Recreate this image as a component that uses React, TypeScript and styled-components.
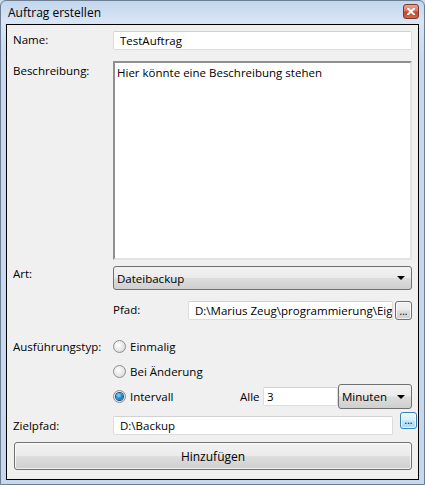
import React from 'react'
import styled, { createGlobalStyle } from 'styled-components'

const GlobalStyle = createGlobalStyle`
  html, body {
    margin: 0;
    padding: 0;
    background: #c9dbef;
  }
  * {
    box-sizing: border-box;
  }
`

const Window = styled.div`
  width: 425px;
  height: 485px;
  display: flex;
  flex-direction: column;
  font-family: "Open Sans", "Noto Sans", sans-serif;
  font-size: 11.5px;
  color: #000;
  border: 1px solid #6d7e93;
  border-radius: 6px 6px 0 0;
  background: linear-gradient(180deg, #c3d6ed 0px, #d7e5f5 20px, #c6d9ef 60px, #c4d8ef 100%);
  overflow: hidden;
`

const TitleBar = styled.div`
  height: 23px;
  flex-shrink: 0;
  display: flex;
  align-items: center;
  justify-content: space-between;
  padding: 0 5px 0 7px;
  font-size: 12px;
`

const CloseButton = styled.div`
  width: 16px;
  height: 15px;
  margin-top: -2px;
  border: 1px solid #7b3a2e;
  border-radius: 3px;
  background: linear-gradient(180deg, #e9a591 0%, #d8735b 48%, #c4472b 52%, #d16845 100%);
  display: flex;
  align-items: center;
  justify-content: center;
`

const Client = styled.div`
  flex: 1;
  margin: 0 5px 4px 5px;
  border: 1px solid #000;
  background: #f0f0f0;
  padding: 0 6px 0 6px;
  display: flex;
  flex-direction: column;
`

const Row = styled.div<{ $top: number; $h: number }>`
  display: flex;
  align-items: flex-start;
  margin-top: ${p => p.$top}px;
  height: ${p => p.$h}px;
  flex-shrink: 0;
`

const Label = styled.div<{ $pad?: number; $w?: number }>`
  width: ${p => (p.$w ? `${p.$w}px` : '100px')};
  flex-shrink: 0;
  padding-top: ${p => p.$pad || 0}px;
  white-space: nowrap;
`

const TextBox = styled.div<{ $w?: number; $top?: number; $indent?: number }>`
  height: 19px;
  ${p => (p.$w ? `width: ${p.$w}px;` : 'flex: 1;')}
  flex-shrink: 0;
  margin-top: ${p => p.$top || 0}px;
  background: #fff;
  border: 1px solid #dcdcdc;
  border-top-color: #d2d2d2;
  border-radius: 2px;
  padding: 1px 0 0 ${p => p.$indent ?? 6}px;
  overflow: hidden;
  white-space: nowrap;
`

const TextArea = styled.div`
  flex: 1;
  height: 100%;
  background: #fff;
  border: 2px solid;
  border-color: #8f8f8f #e3e3e3 #e3e3e3 #8f8f8f;
  padding: 2px 0 0 2px;
`

const ComboBox = styled.div<{ $w?: number }>`
  ${p => (p.$w ? `width: ${p.$w}px;` : 'flex: 1;')}
  height: 100%;
  flex-shrink: 0;
  border: 1px solid #707070;
  border-radius: 3px;
  background: linear-gradient(180deg, #f2f2f2 0%, #ebebeb 48%, #dddddd 52%, #cfcfcf 100%);
  display: flex;
  align-items: center;
  justify-content: space-between;
  padding: 0 6px 0 3px;
`

const Arrow = styled.div`
  width: 0;
  height: 0;
  border-left: 4px solid transparent;
  border-right: 4px solid transparent;
  border-top: 4px solid #000;
`

const SmallButton = styled.div<{ $focused?: boolean; $gap: number; $pull?: number }>`
  width: 17px;
  height: ${p => (p.$focused ? 17 : 19)}px;
  flex-shrink: 0;
  margin-left: ${p => p.$gap}px;
  margin-right: ${p => -(p.$pull || 0)}px;
  border: 1px solid ${p => (p.$focused ? '#3c7fb1' : '#707070')};
  border-radius: 3px;
  background: ${p =>
    p.$focused
      ? 'linear-gradient(180deg, #eaf6fd 0%, #d9f0fc 48%, #bee6fd 52%, #a7d9f5 100%)'
      : 'linear-gradient(180deg, #f2f2f2 0%, #ebebeb 48%, #dddddd 52%, #cfcfcf 100%)'};
  box-shadow: inset 0 0 0 1px rgba(255, 255, 255, 0.7);
  font-size: 10px;
  line-height: 10px;
  display: flex;
  align-items: flex-end;
  justify-content: center;
  padding-bottom: 3px;
`

const RadioGroup = styled.div`
  display: flex;
  flex-direction: column;
  flex: 1;
`

const RadioRow = styled.div`
  height: 25px;
  display: flex;
  align-items: center;
`

const RadioCircle = styled.div<{ $checked?: boolean }>`
  width: 13px;
  height: 13px;
  border-radius: 50%;
  border: 1px solid #8e8f8f;
  background: radial-gradient(circle at 40% 40%, #ffffff 0%, #e6e6e6 55%, #cfcfcf 100%);
  display: flex;
  align-items: center;
  justify-content: center;
  margin-right: 4px;
  flex-shrink: 0;
  &::after {
    content: '';
    display: ${p => (p.$checked ? 'block' : 'none')};
    width: 7px;
    height: 7px;
    border-radius: 50%;
    background: radial-gradient(circle at 40% 35%, #8ad7ff 0%, #1a8cd8 50%, #0a4f8c 100%);
    box-shadow: 0 0 0 1px #1d4f7a;
  }
`

const AllePart = styled.div`
  display: flex;
  align-items: center;
  height: 25px;
  margin-left: auto;
`

const BigButton = styled.div`
  height: 28px;
  margin: 7px 0 0 1px;
  border: 1px solid #707070;
  border-radius: 3px;
  background: linear-gradient(180deg, #f2f2f2 0%, #ebebeb 48%, #dddddd 52%, #cfcfcf 100%);
  box-shadow: inset 0 0 0 1px rgba(255, 255, 255, 0.7);
  display: flex;
  align-items: center;
  justify-content: center;
  font-size: 12px;
`

const App = () => {
  return (
    <>
      <GlobalStyle />
      <Window>
        <TitleBar>
          <span>Auftrag erstellen</span>
          <CloseButton>
            <svg width="8" height="7" viewBox="0 0 8 7">
              <path d="M1 0.5 L7 6.5 M7 0.5 L1 6.5" stroke="#fff" strokeWidth="2" strokeLinecap="square" />
            </svg>
          </CloseButton>
        </TitleBar>
        <Client>
          <Row $top={6} $h={19}>
            <Label $pad={1}>Name:</Label>
            <TextBox>TestAuftrag</TextBox>
          </Row>
          <Row $top={11} $h={199}>
            <Label $pad={2}>Beschreibung:</Label>
            <TextArea>Hier könnte eine Beschreibung stehen</TextArea>
          </Row>
          <Row $top={6} $h={24}>
            <Label>Art:</Label>
            <ComboBox>
              <span>Dateibackup</span>
              <Arrow />
            </ComboBox>
          </Row>
          <Row $top={11} $h={19}>
            <Label />
            <Label $w={75} $pad={1}>Pfad:</Label>
            <TextBox $w={205}>D:\Marius Zeug\programmierung\Eig</TextBox>
            <SmallButton $gap={2}>...</SmallButton>
          </Row>
          <Row $top={14} $h={75}>
            <Label $pad={5}>Ausführungstyp:</Label>
            <RadioGroup>
              <RadioRow>
                <RadioCircle />
                <span>Einmalig</span>
              </RadioRow>
              <RadioRow>
                <RadioCircle />
                <span>Bei Änderung</span>
              </RadioRow>
              <RadioRow>
                <RadioCircle $checked />
                <span>Intervall</span>
                <AllePart>
                  <Label $w={23}>Alle</Label>
                  <TextBox $w={75} $indent={3}>3</TextBox>
                  <ComboBox $w={74}>
                    <span>Minuten</span>
                    <Arrow />
                  </ComboBox>
                </AllePart>
              </RadioRow>
            </RadioGroup>
          </Row>
          <Row $top={3} $h={23}>
            <Label $pad={6}>Zielpfad:</Label>
            <TextBox $top={4}>D:\Backup</TextBox>
            <SmallButton $focused $gap={7} $pull={5}>...</SmallButton>
          </Row>
          <BigButton>Hinzufügen</BigButton>
        </Client>
      </Window>
    </>
  )
}

export default App
